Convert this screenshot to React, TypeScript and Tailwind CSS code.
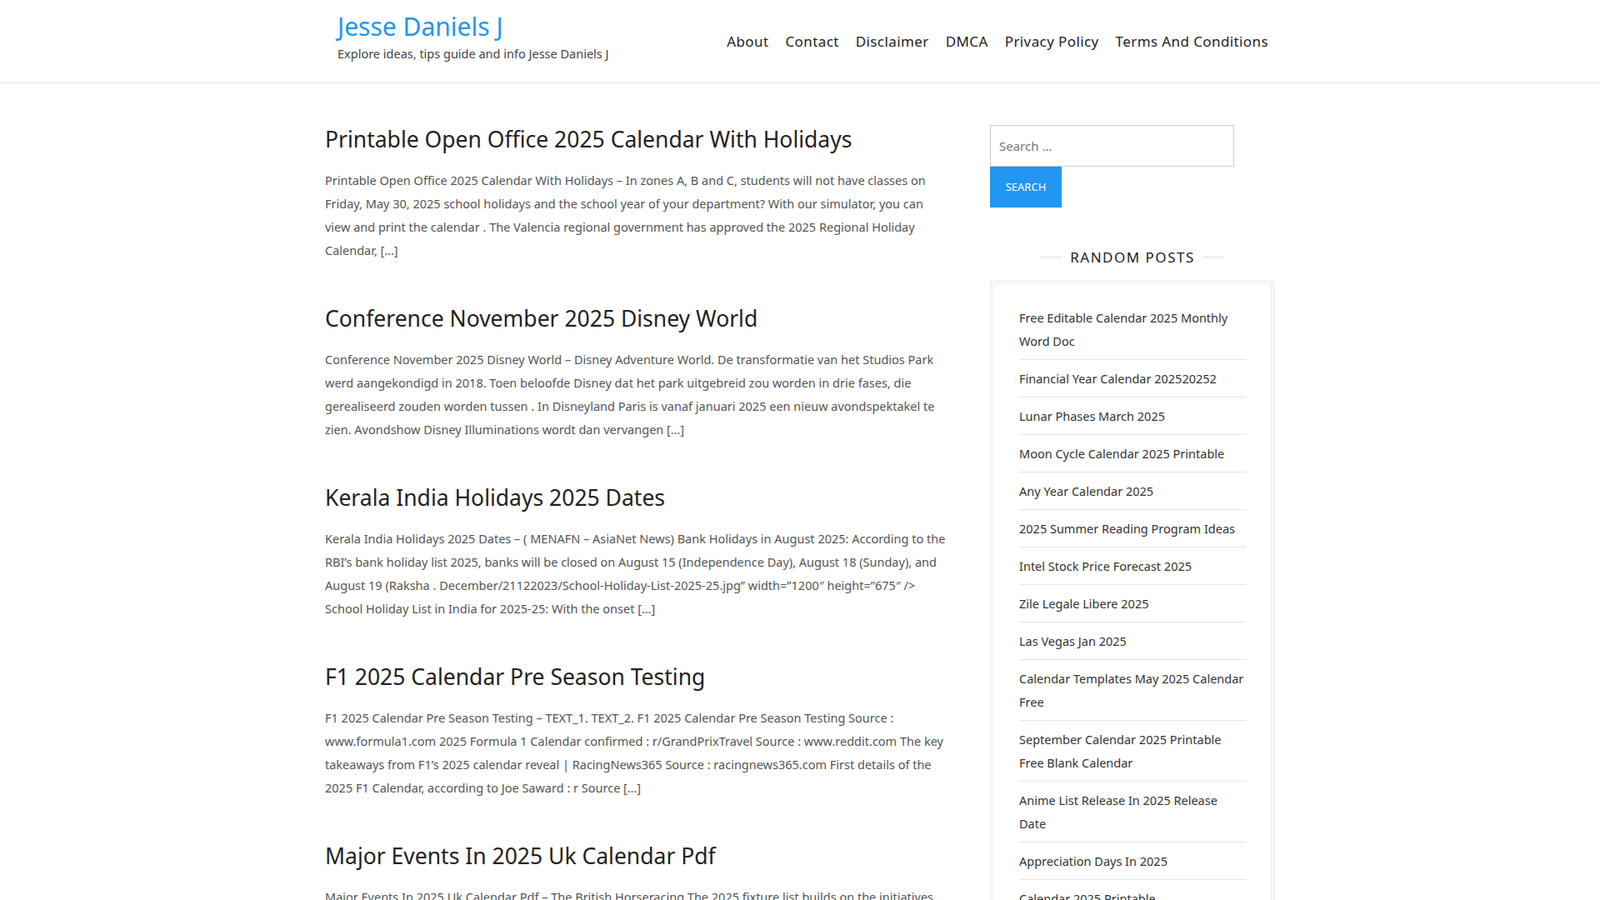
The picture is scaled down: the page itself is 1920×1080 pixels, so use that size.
const nav = ['About', 'Contact', 'Disclaimer', 'DMCA', 'Privacy Policy', 'Terms And Conditions'];

const posts = [
  {
    title: 'Printable Open Office 2025 Calendar With Holidays',
    text: 'Printable Open Office 2025 Calendar With Holidays – In zones A, B and C, students will not have classes on Friday, May 30, 2025 school holidays and the school year of your department? With our simulator, you can view and print the calendar . The Valencia regional government has approved the 2025 Regional Holiday Calendar, […]',
  },
  {
    title: 'Conference November 2025 Disney World',
    text: 'Conference November 2025 Disney World – Disney Adventure World. De transformatie van het Studios Park werd aangekondigd in 2018. Toen beloofde Disney dat het park uitgebreid zou worden in drie fases, die gerealiseerd zouden worden tussen . In Disneyland Paris is vanaf januari 2025 een nieuw avondspektakel te zien. Avondshow Disney Illuminations wordt dan vervangen […]',
  },
  {
    title: 'Kerala India Holidays 2025 Dates',
    text: 'Kerala India Holidays 2025 Dates – ( MENAFN – AsiaNet News) Bank Holidays in August 2025: According to the RBI’s bank holiday list 2025, banks will be closed on August 15 (Independence Day), August 18 (Sunday), and August 19 (Raksha . December/21122023/School-Holiday-List-2025-25.jpg” width=”1200″ height=”675″ /> School Holiday List in India for 2025-25: With the onset […]',
  },
  {
    title: 'F1 2025 Calendar Pre Season Testing',
    text: 'F1 2025 Calendar Pre Season Testing – TEXT_1. TEXT_2. F1 2025 Calendar Pre Season Testing Source : www.formula1.com 2025 Formula 1 Calendar confirmed : r/GrandPrixTravel Source : www.reddit.com The key takeaways from F1’s 2025 calendar reveal | RacingNews365 Source : racingnews365.com First details of the 2025 F1 Calendar, according to Joe Saward : r Source […]',
  },
  {
    title: 'Major Events In 2025 Uk Calendar Pdf',
    text: 'Major Events In 2025 Uk Calendar Pdf – The British Horseracing The 2025 fixture list builds on the initiatives introduced in 2024 to support the sport and its participants across the year […]',
  },
];

const random = [
  'Free Editable Calendar 2025 Monthly Word Doc',
  'Financial Year Calendar 202520252',
  'Lunar Phases March 2025',
  'Moon Cycle Calendar 2025 Printable',
  'Any Year Calendar 2025',
  '2025 Summer Reading Program Ideas',
  'Intel Stock Price Forecast 2025',
  'Zile Legale Libere 2025',
  'Las Vegas Jan 2025',
  'Calendar Templates May 2025 Calendar Free',
  'September Calendar 2025 Printable Free Blank Calendar',
  'Anime List Release In 2025 Release Date',
  'Appreciation Days In 2025',
  'Calendar 2025 Printable',
];

export default function App() {
  return (
    <div className="h-screen overflow-y-scroll bg-white text-[#333] font-['Open_Sans','Liberation_Sans',sans-serif]">
      <header className="border-b border-[#e8e8e8]">
        <div className="mx-auto flex h-[99px] w-[1140px] items-center justify-between pl-[15px] pr-[8px]">
          <div className="-mt-[12px]">
            <div className="text-[30px] leading-[40px] text-[#2196f3]">Jesse Daniels J</div>
            <div className="mt-[2px] text-[14.5px] text-[#444]">Explore ideas, tips guide and info Jesse Daniels J</div>
          </div>
          <nav className="flex gap-[20px] text-[17px] tracking-[0.4px] text-[#222]">
            {nav.map((n) => (
              <a key={n}>{n}</a>
            ))}
          </nav>
        </div>
      </header>
      <div className="mx-auto flex w-[1140px] pt-[50px]">
        <main className="w-[746px]">
          {posts.map((p) => (
            <article key={p.title} className="mb-[51px]">
              <h2 className="text-[26.5px] leading-[34px] text-[#222]">{p.title}</h2>
              <p className="mt-[18px] text-[14.5px] leading-[28px] text-[#555]">{p.text}</p>
            </article>
          ))}
        </main>
        <aside className="ml-[52px] w-[342px]">
          <input
            placeholder="Search …"
            className="block h-[50px] w-[293px] border border-[#ccc] px-[10px] text-[15px] text-[#666] placeholder:text-[#777] outline-none"
          />
          <button className="block h-[49px] w-[86px] bg-[#2196f3] text-[13px] uppercase text-white">Search</button>
          <div className="mt-[47px] flex items-center justify-center gap-[10px]">
            <span className="h-px w-[25px] bg-[#ddd]" />
            <h3 className="text-[17px] tracking-[1.5px] text-[#222]">RANDOM POSTS</h3>
            <span className="h-px w-[25px] bg-[#ddd]" />
          </div>
          <div className="mt-[14px] border-[3px] border-[#f5f5f5] p-[1px]">
            <ul className="border border-[#eee] px-[30px] pt-[18px] pb-[10px]">
              {random.map((r) => (
                <li key={r} className="border-b border-[#e5e5e5] py-[8px] text-[14.5px] leading-[28px] text-[#333]">
                  {r}
                </li>
              ))}
            </ul>
          </div>
        </aside>
      </div>
    </div>
  );
}
